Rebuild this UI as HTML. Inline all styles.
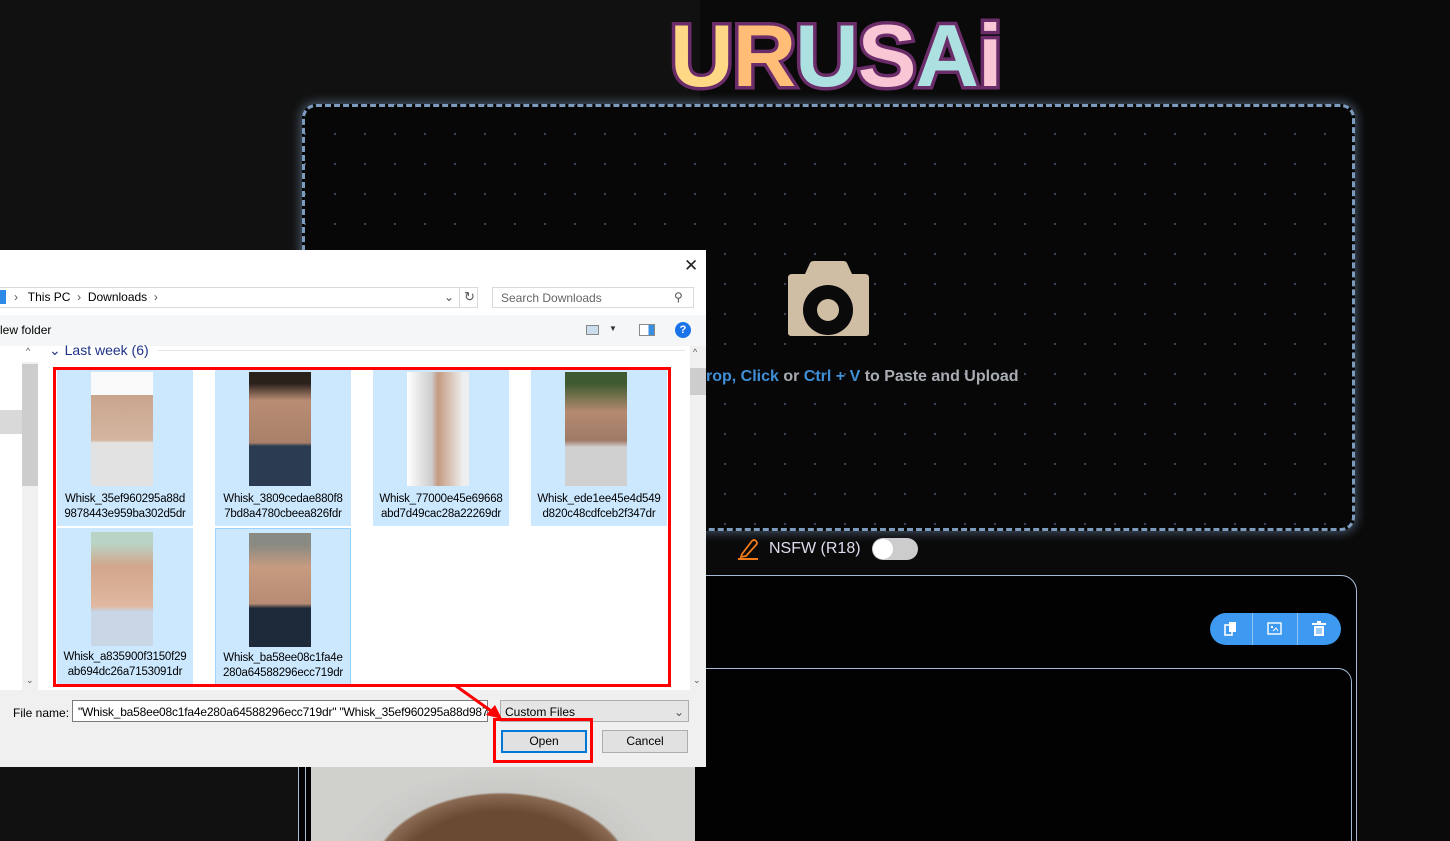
<!DOCTYPE html>
<html style="overflow:hidden;height:841px"><head><meta charset="utf-8"><style>
*{box-sizing:border-box;margin:0;padding:0}
body{width:1450px;height:841px;overflow:hidden;background:#111;font-family:"Liberation Sans",sans-serif;position:relative}
.abs{position:absolute}
.drop{left:302px;top:104px;width:1053px;height:427px;border:3px dashed #7d9bbd;border-radius:14px;background-color:#070707;background-image:radial-gradient(circle,#3c4a5a 1px,transparent 1.3px);background-size:30px 30px;background-position:15px 12px;box-shadow:0 0 10px 2px rgba(140,170,210,.45)}
.dlg{left:0;top:250px;width:706px;height:517px;background:#fff;font-size:12px;color:#000}
.tile{position:absolute;width:136px;background:#cce8ff;text-align:center;font-size:11.5px;line-height:15px;letter-spacing:-0.2px}
.thumb{position:absolute;left:34px;width:62px;height:114px}
.tile span{position:absolute;left:0;right:0;top:122px}
</style></head><body>
<div class="abs" style="left:700px;top:0;width:750px;height:841px;background:#0a0a0a"></div>
<!-- logo -->
<div class="abs" style="left:670px;top:12px;font:bold 88px/88px 'Liberation Sans',sans-serif;letter-spacing:-1px;-webkit-text-stroke:7px #6b2d6a;paint-order:stroke fill;white-space:nowrap">
<span style="color:#ffd886">U</span><span style="color:#ffbd78">R</span><span style="color:#ade0e0">U</span><span style="color:#f9c6d6">S</span><span style="color:#ade0e0">A</span><span style="color:#f9c6d6">i</span></div>
<div class="abs drop"></div>
<!-- camera -->
<svg class="abs" style="left:787px;top:261px" width="83" height="76" viewBox="0 0 83 76"><path d="M18 13 L23 2 Q24 0 27 0 H56 Q59 0 60 2 L65 13 H78 Q82 13 82 17 V72 Q82 75 78 75 H5 Q1 75 1 72 V17 Q1 13 5 13Z" fill="#cfbea3"/><circle cx="41" cy="49" r="25" fill="#0a0a0a"/><circle cx="41" cy="49" r="11" fill="#cfbea3"/></svg>
<div class="abs" style="left:706px;top:368px;font-weight:bold;font-size:16px;color:#a9adb3;white-space:nowrap"><span style="color:#3f8fd6">rop, Click</span> or <span style="color:#3f8fd6">Ctrl + V</span> to Paste and Upload</div>
<!-- NSFW -->
<svg class="abs" style="left:738px;top:538px" width="22" height="22" viewBox="0 0 22 22"><path d="M4 16 L14 3 Q16 1 18 3 Q20 5 18 7 L8 18 L3 19Z" fill="none" stroke="#f07a1a" stroke-width="1.8"/><rect x="0" y="20" width="20" height="2" fill="#f07a1a"/></svg>
<div class="abs" style="left:769px;top:540px;font-size:16px;color:#dde;">NSFW (R18)</div>
<div class="abs" style="left:872px;top:538px;width:46px;height:22px;border-radius:11px;background:#ccc"></div>
<div class="abs" style="left:873px;top:539px;width:20px;height:20px;border-radius:10px;background:#fff"></div>
<!-- panel -->
<div class="abs" style="left:298px;top:575px;width:1059px;height:300px;border:1.5px solid #a6bcd6;border-radius:16px;background:#020202"></div>
<div class="abs" style="left:305px;top:668px;width:1047px;height:200px;border:1.5px solid #a6bcd6;border-radius:14px;background:#020202"></div>
<div class="abs" style="left:1210px;top:613px;width:131px;height:32px;border-radius:16px;background:#3d9af0"></div>
<div class="abs" style="left:1252px;top:613px;width:1px;height:32px;background:#8ec3f5"></div>
<div class="abs" style="left:1297px;top:613px;width:1px;height:32px;background:#8ec3f5"></div>
<svg class="abs" style="left:1224px;top:621px" width="14" height="16"><rect x="1" y="4" width="7" height="10" fill="none" stroke="#fff" stroke-width="1.6"/><rect x="5" y="1" width="7" height="10" fill="#fff"/></svg>
<svg class="abs" style="left:1267px;top:622px" width="15" height="13"><rect x="1" y="1" width="13" height="11" fill="none" stroke="#fff" stroke-width="1.4"/><rect x="4" y="4" width="2" height="2" fill="#fff"/><path d="M6 9 L9 6 L11 9" stroke="#fff" fill="none"/></svg>
<svg class="abs" style="left:1312px;top:621px" width="14" height="16"><rect x="0" y="2" width="14" height="2" fill="#fff"/><rect x="5" y="0" width="4" height="2" fill="#fff"/><path d="M2 5 H12 V15 H2Z" fill="#fff"/><path d="M5 7 V13 M7 7 V13 M9 7 V13" stroke="#3d9af0" stroke-width="1"/></svg>
<div class="abs" style="left:311px;top:767px;width:384px;height:74px;background:radial-gradient(ellipse 170px 110px at 190px 110px,#6a4a33 60%,#8a6a52 75%,#c9c9c6 77%,#d0d0cd)"></div>
<!-- dialog -->
<div class="abs dlg">
 <div class="abs" style="left:684px;top:6px;font-size:17px;color:#222">✕</div>
 <div class="abs" style="left:0;top:37px;width:478px;height:21px;border:1px solid #d9d9d9;border-left:none"></div>
 <div class="abs" style="left:0;top:40px;width:6px;height:14px;background:#2e8ae6"></div>
 <div class="abs" style="left:14px;top:40px;color:#555">›&nbsp;&nbsp; <span style="color:#000">This PC</span> &nbsp;›&nbsp; <span style="color:#000">Downloads</span> &nbsp;›</div>
 <div class="abs" style="left:444px;top:40px;color:#555">⌄</div>
 <div class="abs" style="left:459px;top:37px;width:1px;height:21px;background:#d9d9d9"></div>
 <div class="abs" style="left:464px;top:39px;color:#555;font-size:13px">↻</div>
 <div class="abs" style="left:492px;top:37px;width:202px;height:21px;border:1px solid #d9d9d9;padding:3px 8px;color:#666">Search Downloads</div>
 <div class="abs" style="left:674px;top:40px;color:#555">⚲</div>
 <div class="abs" style="left:0;top:65px;width:706px;height:31px;background:#f5f6f7"></div>
 <div class="abs" style="left:0;top:73px">lew folder</div>
 <div class="abs" style="left:586px;top:75px;width:13px;height:10px;border:1px solid #888;background:#cde"></div>
 <div class="abs" style="left:609px;top:74px;font-size:8px;color:#333">▼</div>
 <div class="abs" style="left:639px;top:74px;width:16px;height:12px;border:1px solid #888;background:linear-gradient(90deg,#fff 60%,#3a8ee0 60%)"></div>
 <div class="abs" style="left:675px;top:72px;width:16px;height:16px;border-radius:8px;background:#1a73e8;color:#fff;font-weight:bold;font-size:11px;text-align:center;line-height:16px">?</div>
 <div class="abs" style="left:22px;top:112px;width:16px;height:328px;background:#f0f0f0"></div>
 <div class="abs" style="left:22px;top:114px;width:16px;height:122px;background:#cdcdcd"></div>
 <div class="abs" style="left:0;top:160px;width:22px;height:24px;background:#d9d9d9"></div>
 <div class="abs" style="left:26px;top:96px;font-size:9px;color:#555">^</div>
 <div class="abs" style="left:26px;top:425px;font-size:9px;color:#555">⌄</div>
 <div class="abs" style="left:690px;top:96px;width:16px;height:344px;background:#f0f0f0"></div>
 <div class="abs" style="left:690px;top:118px;width:16px;height:27px;background:#cdcdcd"></div>
 <div class="abs" style="left:693px;top:97px;font-size:9px;color:#555">^</div>
 <div class="abs" style="left:693px;top:425px;font-size:9px;color:#555">⌄</div>
 <div class="abs" style="left:49px;top:92px;font-size:14px;color:#1e3287">⌄ Last week (6)</div>
 <div class="abs" style="left:158px;top:100px;width:527px;height:1px;background:#e5e5e5"></div>
 <div class="tile" style="left:57px;top:120px;height:156px"><div class="thumb" style="top:2px;background:linear-gradient(#fafafa 20%,#c9a58e 20%,#d4b6a0 60%,#e2e2e2 62%)"></div><span>Whisk_35ef960295a88d<br>9878443e959ba302d5dr</span></div>
 <div class="tile" style="left:215px;top:120px;height:156px"><div class="thumb" style="top:2px;background:linear-gradient(#2a211b 10%,#b98d74 25%,#a9806a 62%,#2b3c52 65%)"></div><span>Whisk_3809cedae880f8<br>7bd8a4780cbeea826fdr</span></div>
 <div class="tile" style="left:373px;top:120px;height:156px"><div class="thumb" style="top:2px;background:linear-gradient(90deg,#fff,#ccc 40%,#c49a80 50%,#eee 90%)"></div><span>Whisk_77000e45e69668<br>abd7d49cac28a22269dr</span></div>
 <div class="tile" style="left:531px;top:120px;height:156px"><div class="thumb" style="top:2px;background:linear-gradient(#3e5a30 10%,#b58a70 35%,#a07a66 60%,#d0d0d0 66%)"></div><span>Whisk_ede1ee45e4d549<br>d820c48cdfceb2f347dr</span></div>
 <div class="tile" style="left:57px;top:278px;height:158px"><div class="thumb" style="top:4px;background:linear-gradient(#b9d3c4 10%,#d2a68c 30%,#e0b8a0 65%,#c8d6e6 70%)"></div><span>Whisk_a835900f3150f29<br>ab694dc26a7153091dr</span></div>
 <div class="tile" style="left:215px;top:278px;height:158px;border:1px solid #99d1ff"><div class="thumb" style="top:4px;left:33px;background:linear-gradient(#8a8a84 10%,#c69b80 30%,#b88c74 62%,#1e2a3a 66%)"></div><span>Whisk_ba58ee08c1fa4e<br>280a64588296ecc719dr</span></div>
 <div class="abs" style="left:53px;top:117px;width:618px;height:320px;border:3px solid #f00"></div>
 <div class="abs" style="left:0;top:440px;width:706px;height:77px;background:#f0f0f0"></div>
 <div class="abs" style="left:13px;top:456px">File name:</div>
 <div class="abs" style="left:72px;top:450px;width:416px;height:22px;background:#fff;border:1px solid #7a7a7a;padding:4px 5px;white-space:nowrap;overflow:hidden;letter-spacing:-0.2px">"Whisk_ba58ee08c1fa4e280a64588296ecc719dr" "Whisk_35ef960295a88d987</div>
 <div class="abs" style="left:500px;top:450px;width:189px;height:22px;background:#e5e5e5;border:1px solid #adadad;padding:4px 4px">Custom Files<span style="float:right;color:#555">⌄</span></div>
 <div class="abs" style="left:501px;top:480px;width:86px;height:23px;background:#e1e1e1;border:2px solid #0078d7;text-align:center;line-height:19px">Open</div>
 <div class="abs" style="left:602px;top:480px;width:86px;height:23px;background:#e1e1e1;border:1px solid #adadad;text-align:center;line-height:21px">Cancel</div>
 <div class="abs" style="left:493px;top:468px;width:100px;height:45px;border:3px solid #f00"></div>
</div>
<svg class="abs" style="left:450px;top:683px" width="60" height="45"><line x1="6" y1="3" x2="44" y2="30" stroke="#f00" stroke-width="3"/><path d="M52 36 L36 32 L45 22Z" fill="#f00"/></svg>
</body></html>
